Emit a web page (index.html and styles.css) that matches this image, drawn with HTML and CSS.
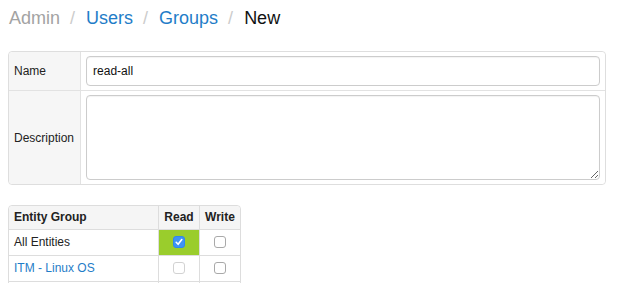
FILE: index.html
```html
<!DOCTYPE html>
<html>
<head>
<meta charset="utf-8">
<title>New Group</title>
<link rel="stylesheet" href="styles.css">
</head>
<body>
<ul class="breadcrumb">
  <li class="muted">Admin</li>
  <li class="divider">/</li>
  <li><a href="#">Users</a></li>
  <li class="divider">/</li>
  <li><a href="#">Groups</a></li>
  <li class="divider">/</li>
  <li class="active">New</li>
</ul>

<table class="form-table">
  <tr class="row-name">
    <th>Name</th>
    <td><input class="text-input" type="text" value="read-all"></td>
  </tr>
  <tr class="row-desc">
    <th>Description</th>
    <td><textarea class="text-area"></textarea></td>
  </tr>
</table>

<table class="perm-table">
  <thead>
    <tr>
      <th class="col-name">Entity Group</th>
      <th class="col-check">Read</th>
      <th class="col-check">Write</th>
    </tr>
  </thead>
  <tbody>
    <tr>
      <td>All Entities</td>
      <td class="check granted"><input class="cb" type="checkbox" checked></td>
      <td class="check"><input class="cb" type="checkbox"></td>
    </tr>
    <tr>
      <td><a href="#">ITM - Linux OS</a></td>
      <td class="check"><input class="cb" type="checkbox" disabled></td>
      <td class="check"><input class="cb" type="checkbox"></td>
    </tr>
    <tr>
      <td>&nbsp;</td>
      <td class="check"><input class="cb" type="checkbox" disabled></td>
      <td class="check"><input class="cb" type="checkbox"></td>
    </tr>
  </tbody>
</table>
</body>
</html>
```
FILE: styles.css
```css
html, body {
  margin: 0;
  padding: 0;
  background: #ffffff;
}
body {
  margin: 8px;
  font-family: "Liberation Sans", Arial, Helvetica, sans-serif;
  font-size: 12px;
  color: #222;
}
a {
  color: #1f7dc8;
  text-decoration: none;
}

.breadcrumb {
  list-style: none;
  margin: 0;
  padding: 0 0 0 1px;
  display: flex;
  font-size: 18px;
  line-height: 20px;
}
.breadcrumb li.muted { color: #a3a3a3; }
.breadcrumb li.active { color: #111; }
.breadcrumb li.divider {
  color: #cccccc;
  padding: 0 11px 0 10px;
}

.form-table {
  margin-top: 23px;
  width: 598px;
  border-collapse: separate;
  border-spacing: 0;
  border: 1px solid #dedede;
  border-radius: 4px;
}
.form-table th {
  background: #f6f6f6;
  font-weight: normal;
  text-align: left;
  color: #222;
  padding: 4px 6px 4px 5px;
  white-space: nowrap;
  width: 1%;
  border-right: 1px solid #e2e2e2;
  border-top-left-radius: 4px;
}
.form-table .row-desc th {
  border-top-left-radius: 0;
  border-bottom-left-radius: 4px;
}
.form-table td {
  padding: 4px 5px;
  background: #fff;
  border-top-right-radius: 4px;
}
.form-table .row-desc th,
.form-table .row-desc td {
  border-top: 1px solid #e2e2e2;
}
.form-table .row-desc td {
  border-top-right-radius: 0;
  border-bottom-right-radius: 4px;
}
.text-input {
  display: block;
  box-sizing: border-box;
  width: 100%;
  height: 30px;
  margin: 0;
  padding: 0 6px;
  border: 1px solid #cccccc;
  border-radius: 4px;
  font-family: "Liberation Sans", Arial, sans-serif;
  font-size: 12px;
  color: #111;
  box-shadow: inset 0 1px 1px rgba(0,0,0,0.05);
}
.text-area {
  display: block;
  box-sizing: border-box;
  width: 100%;
  height: 85px;
  margin: 0;
  padding: 4px 6px;
  border: 1px solid #cccccc;
  border-radius: 4px;
  font-family: "Liberation Sans", Arial, sans-serif;
  font-size: 12px;
  box-shadow: inset 0 1px 1px rgba(0,0,0,0.05);
}

.perm-table {
  margin-top: 20px;
  border-collapse: separate;
  border-spacing: 0;
  border: 1px solid #dddddd;
  border-radius: 4px;
  line-height: 17px;
}
.perm-table th {
  background: #f5f5f5;
  font-weight: bold;
  color: #222;
  padding: 3px 5px;
  text-align: left;
}
.perm-table th.col-name {
  width: 139px;
  border-top-left-radius: 4px;
}
.perm-table th.col-check {
  text-align: center;
  width: 30px;
  border-left: 1px solid #dddddd;
}
.perm-table th.col-check:last-child {
  border-top-right-radius: 4px;
}
.perm-table td {
  padding: 4px 5px;
  border-top: 1px solid #dddddd;
  color: #222;
}
.perm-table td.check {
  text-align: center;
  border-left: 1px solid #dddddd;
}
.perm-table td.granted {
  background: #9acd2c;
}

.cb {
  -webkit-appearance: none;
  appearance: none;
  display: inline-block;
  vertical-align: middle;
  width: 12px;
  height: 12px;
  margin: 0;
  border: 1px solid #a9a9a9;
  border-radius: 3px;
  background: #fff;
  box-sizing: border-box;
  position: relative;
  top: -1px;
}
.cb:disabled {
  border-color: #d2d2d2;
}
.cb:checked {
  border-color: #2f86f0;
  background: #3e93f5 url("data:image/svg+xml;utf8,<svg xmlns='http://www.w3.org/2000/svg' width='12' height='12' viewBox='0 0 12 12'><path d='M3.2 6.3 L5.1 8.3 L8.8 3.6' fill='none' stroke='white' stroke-width='1.6' stroke-linecap='round' stroke-linejoin='round'/></svg>") no-repeat center / 12px 12px;
}
```
